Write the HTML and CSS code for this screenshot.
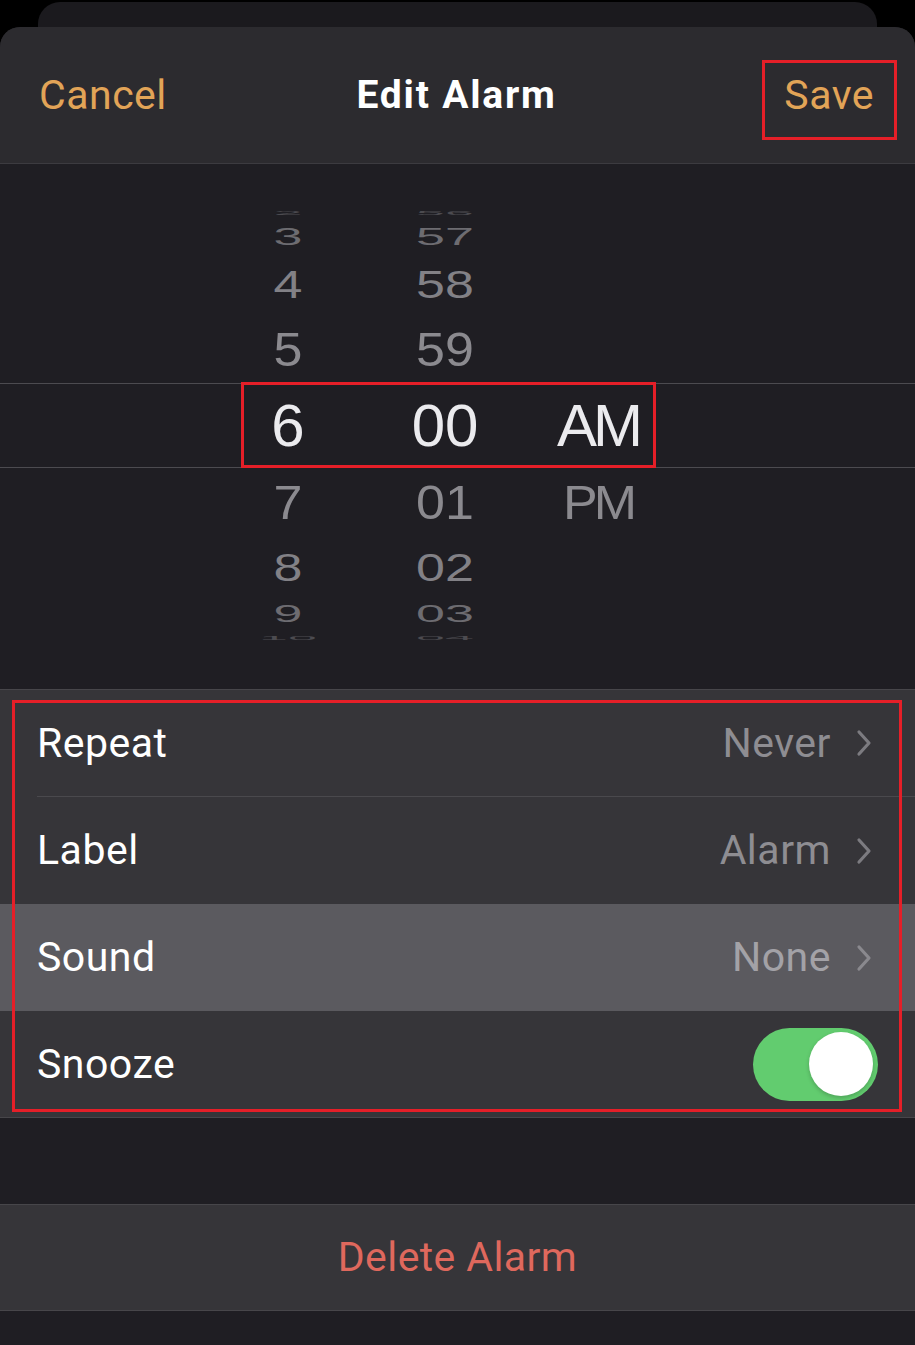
FILE: index.html
```html
<!DOCTYPE html>
<html>
<head>
<meta charset="utf-8">
<title>Edit Alarm</title>
<link rel="stylesheet" href="styles.css">
</head>
<body>
<div class="page">
  <div class="backcard"></div>
  <div class="sheet">
    <header class="header">
      <span class="nav-btn cancel">Cancel</span>
      <span class="title">Edit Alarm</span>
      <span class="nav-btn save">Save</span>
    </header>

    <section class="picker">
      <div class="pk-row r16 f5"><span class="cell"><i>2</i></span><span class="cell"><i>56</i></span><span class="cell"></span></div>
      <div class="pk-row r32 f4"><span class="cell"><i>3</i></span><span class="cell"><i>57</i></span><span class="cell"></span></div>
      <div class="pk-row r62 f3"><span class="cell"><i>4</i></span><span class="cell"><i>58</i></span><span class="cell"></span></div>
      <div class="pk-row r68 f2"><span class="cell"><i>5</i></span><span class="cell"><i>59</i></span><span class="cell"></span></div>
      <div class="pk-row selected"><span class="cell"><i>6</i></span><span class="cell"><i>00</i></span><span class="cell ampm"><i>AM</i></span></div>
      <div class="pk-row r68 f2 below"><span class="cell"><i>7</i></span><span class="cell"><i>01</i></span><span class="cell ampm"><i>PM</i></span></div>
      <div class="pk-row r62 f3"><span class="cell"><i>8</i></span><span class="cell"><i>02</i></span><span class="cell"></span></div>
      <div class="pk-row r32 f4"><span class="cell"><i>9</i></span><span class="cell"><i>03</i></span><span class="cell"></span></div>
      <div class="pk-row r16 f5"><span class="cell"><i>10</i></span><span class="cell"><i>04</i></span><span class="cell"></span></div>
    </section>

    <section class="group">
      <div class="row">
        <div class="row-inner sep">
          <span class="label">Repeat</span>
          <span class="value">Never</span>
          <svg class="chev" width="18" height="28" viewBox="0 0 18 28"><polyline points="4,3 14,14 4,25" fill="none" stroke="#7c7b80" stroke-width="3.2" stroke-linecap="round" stroke-linejoin="round"/></svg>
        </div>
      </div>
      <div class="row">
        <div class="row-inner">
          <span class="label">Label</span>
          <span class="value">Alarm</span>
          <svg class="chev" width="18" height="28" viewBox="0 0 18 28"><polyline points="4,3 14,14 4,25" fill="none" stroke="#7c7b80" stroke-width="3.2" stroke-linecap="round" stroke-linejoin="round"/></svg>
        </div>
      </div>
      <div class="row active">
        <div class="row-inner">
          <span class="label">Sound</span>
          <span class="value">None</span>
          <svg class="chev" width="18" height="28" viewBox="0 0 18 28"><polyline points="4,3 14,14 4,25" fill="none" stroke="#8a898e" stroke-width="3.2" stroke-linecap="round" stroke-linejoin="round"/></svg>
        </div>
      </div>
      <div class="row last">
        <div class="row-inner toggle-row">
          <span class="label">Snooze</span>
          <span class="toggle"><span class="knob"></span></span>
        </div>
      </div>
    </section>

    <div class="spacer"></div>

    <section class="delete">
      <span class="delete-text">Delete Alarm</span>
    </section>
  </div>

  <div class="anno anno-save"></div>
  <div class="anno anno-picker"></div>
  <div class="anno anno-rows"></div>
</div>
</body>
</html>
```

FILE: styles.css
```css
* { box-sizing: border-box; }

html, body {
  margin: 0;
  padding: 0;
  background: #000;
}

body {
  font-family: Roboto, "Liberation Sans", sans-serif;
  color: #fff;
}

.page {
  position: relative;
  width: 915px;
  height: 1345px;
  overflow: hidden;
  background: #000;
}

.backcard {
  height: 25px;
  margin: 2px 38px 0;
  background: #1b1a1e;
  border-radius: 22px 22px 0 0;
}

.sheet {
  background: #1f1e23;
  border-radius: 20px 20px 0 0;
  height: 1318px;
  overflow: hidden;
}

/* header */
.header {
  height: 137px;
  background: #2c2b2f;
  border-bottom: 1px solid #3c3b40;
  display: grid;
  grid-template-columns: 1fr auto 1fr;
  align-items: center;
  padding: 0 41px 0 39px;
}

.nav-btn {
  font-size: 41px;
  letter-spacing: 0.5px;
  color: #e2a457;
  line-height: 1;
}

.save { justify-self: end; }

.title {
  font-size: 39px;
  font-weight: 700;
  letter-spacing: 1.8px;
  line-height: 1;
  color: #fff;
}

/* picker */
.picker {
  height: 525px;
  padding-top: 41px;
}

.pk-row {
  display: grid;
  grid-template-columns: 120px 120px 120px;
  grid-template-rows: 100%;
  column-gap: 37px;
  padding-left: 228px;
  font-family: "Liberation Sans", Arial, sans-serif;
  font-size: 52px;
}

.cell {
  display: flex;
  align-items: center;
  justify-content: center;
  min-height: 0;
  overflow: visible;
}

.cell i {
  font-style: normal;
  display: block;
  line-height: 1;
}

.ampm { transform: translateX(-4px); }
.ampm i { letter-spacing: -4px; }

.r16 { height: 16px; }
.r32 { height: 32px; }
.r62 { height: 62px; }
.r68 { height: 68px; }

.f2 { color: #8b8a8f; }
.f2 i { transform: scaleY(0.94); }
.f3 { color: #828186; }
.f3 i { transform: scaleY(0.76); }
.f4 { color: #6d6c71; }
.f4 i { transform: scaleY(0.46); }
.f5 { color: #4c4b50; }
.f5 i { transform: scaleY(0.12); }

.selected {
  height: 85px;
  border-top: 1px solid #4c4b50;
  border-bottom: 1px solid #4c4b50;
  font-size: 60px;
  color: #ebebee;
}

/* settings group */
.group {
  background: #363539;
  border-top: 1px solid #47464a;
  border-bottom: 1px solid #47464a;
}

.row {
  height: 107px;
}

.row.last { height: 106px; }

.row.active { background: #5b5a5f; }

.row-inner {
  height: 100%;
  margin-left: 37px;
  padding-right: 42px;
  display: flex;
  align-items: center;
}

.row-inner.sep { border-bottom: 1px solid #4a494d; }

.label {
  font-size: 41px;
  letter-spacing: 0.5px;
  color: #fff;
  flex: 1;
  line-height: 1;
}

.value {
  font-size: 41px;
  letter-spacing: 0.5px;
  color: #8e8d92;
  line-height: 1;
  margin-right: 24px;
}

.active .value { color: #a3a2a7; }

.chev { display: block; }

.toggle-row { padding-right: 37px; }

.toggle {
  width: 125px;
  height: 73px;
  border-radius: 37px;
  background: #62cc6f;
  display: flex;
  justify-content: flex-end;
  align-items: center;
  padding: 0 5px;
}

.knob {
  width: 64px;
  height: 64px;
  border-radius: 50%;
  background: #fff;
  box-shadow: 0 2px 4px rgba(0,0,0,0.2);
}

.spacer { height: 86px; }

.delete {
  height: 107px;
  background: #363539;
  border-top: 1px solid #47464a;
  border-bottom: 1px solid #47464a;
  display: flex;
  align-items: center;
  justify-content: center;
}

.delete-text {
  font-size: 41px;
  letter-spacing: 0.4px;
  color: #df685d;
  line-height: 1;
}

/* red annotation boxes drawn over the screenshot */
.anno {
  position: absolute;
  border: 3px solid #e51f28;
  pointer-events: none;
}

.anno-save { left: 762px; top: 60px; width: 135px; height: 80px; }
.anno-picker { left: 241px; top: 382px; width: 415px; height: 86px; }
.anno-rows { left: 12px; top: 700px; width: 890px; height: 412px; }
```
